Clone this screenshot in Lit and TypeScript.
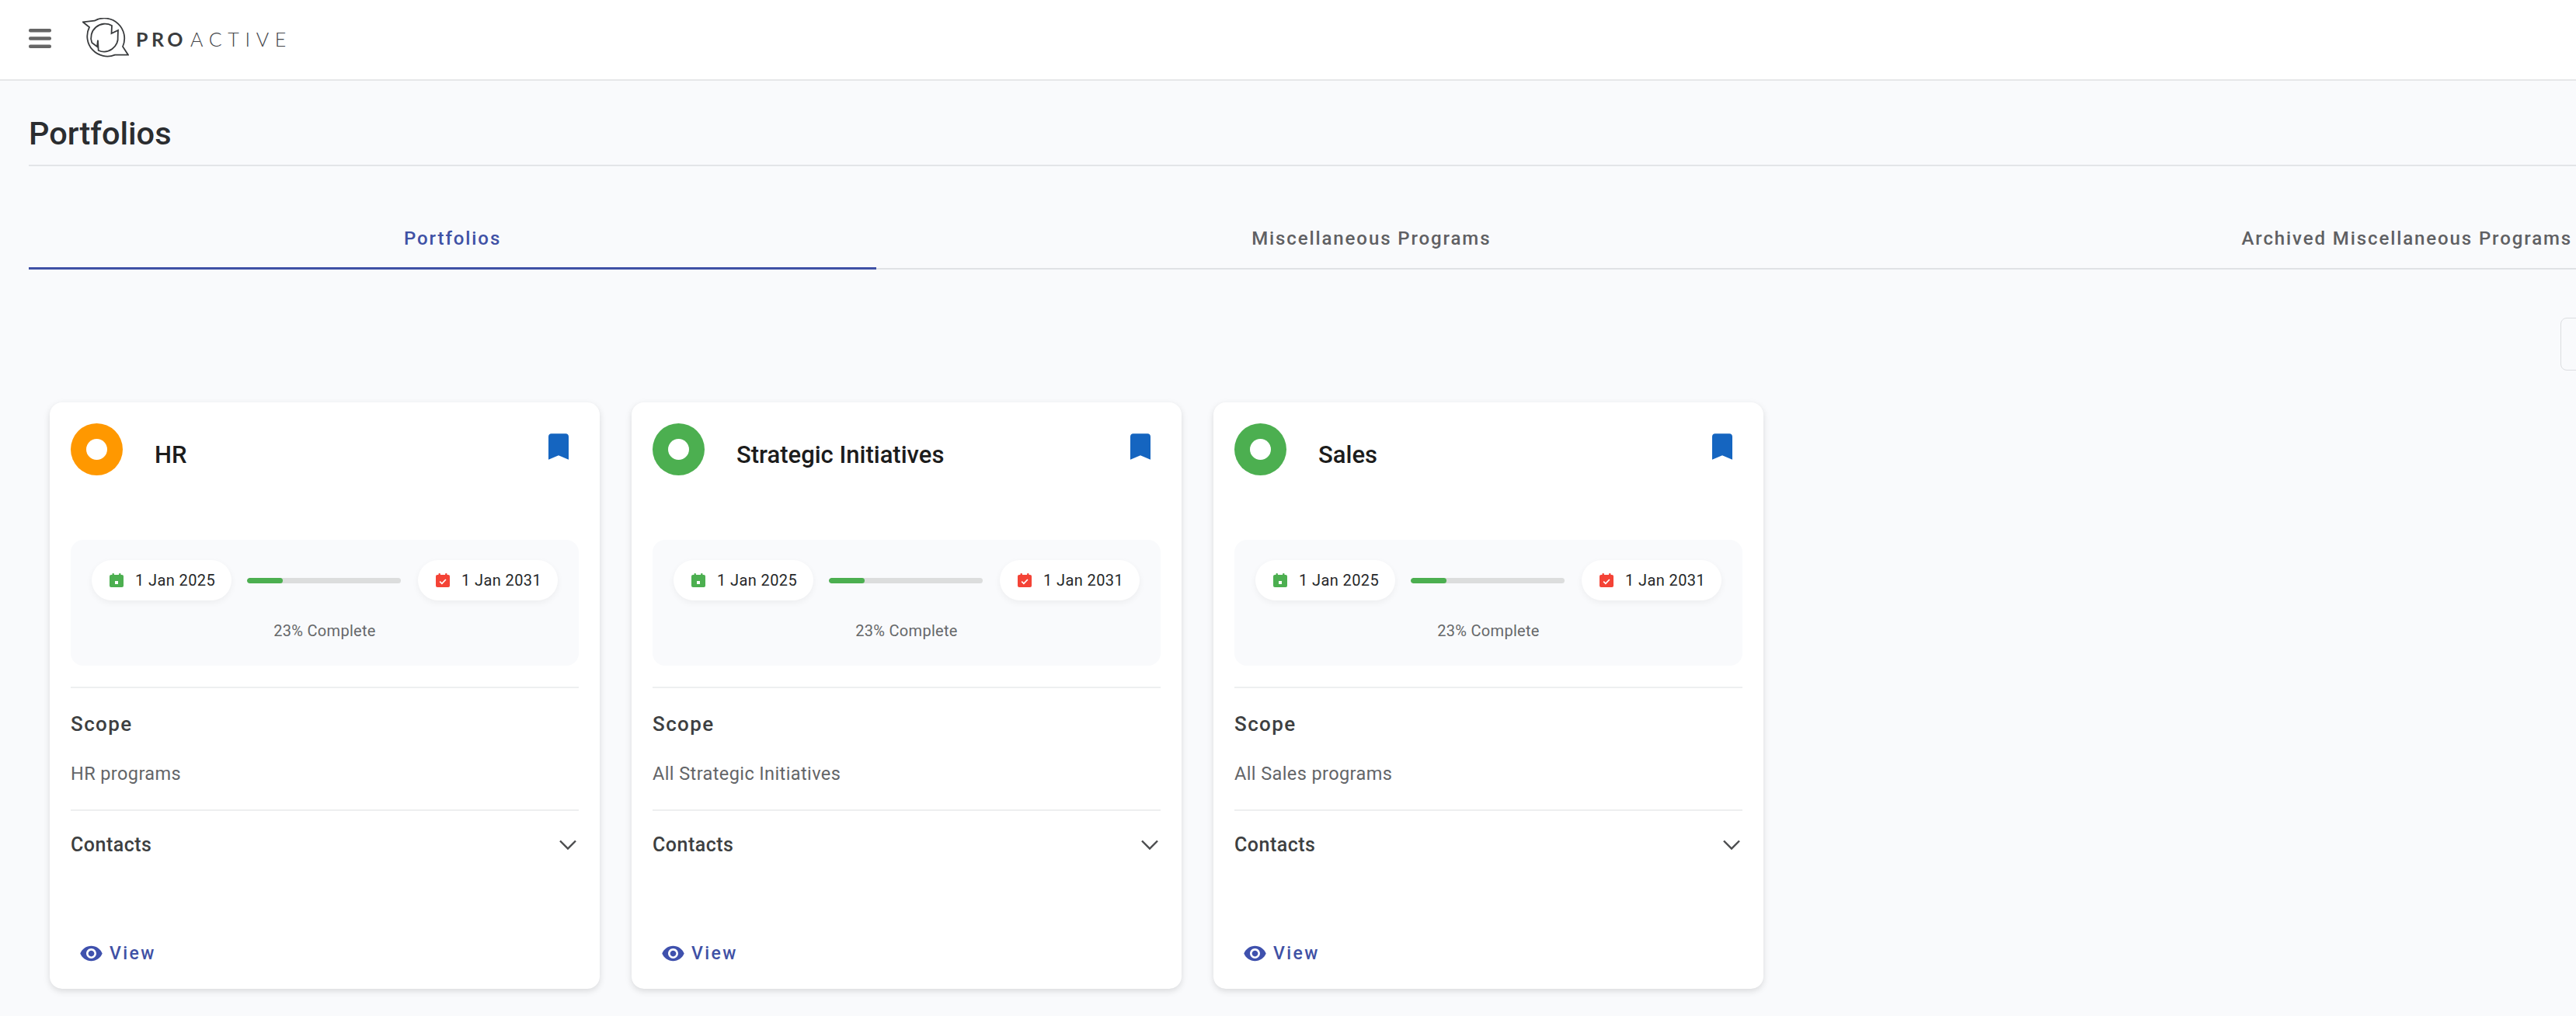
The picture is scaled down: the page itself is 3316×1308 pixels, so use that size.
import { html, css, LitElement, svg } from 'lit';
import { customElement } from 'lit/decorators.js';

interface Portfolio {
  name: string;
  status: string;
  scope: string;
}

const portfolios: Portfolio[] = [
  { name: 'HR', status: '#ff9800', scope: 'HR programs' },
  { name: 'Strategic Initiatives', status: '#4caf50', scope: 'All Strategic Initiatives' },
  { name: 'Sales', status: '#4caf50', scope: 'All Sales programs' },
];

const tabs = ['Portfolios', 'Miscellaneous Programs', 'Archived Miscellaneous Programs'];

const calendarBody = svg`
  <rect x="0" y="2" width="18" height="16" rx="2"></rect>
  <rect x="3.5" y="0" width="2.4" height="4" rx="1"></rect>
  <rect x="12.1" y="0" width="2.4" height="4" rx="1"></rect>
`;

@customElement('app-root')
export class AppRoot extends LitElement {
  static styles = css`
    :host {
      display: block;
      width: 100%;
      height: 1308px;
      overflow: hidden;
      background-color: #f9fafc;
      font-family: Roboto, "Liberation Sans", sans-serif;
      color: #2b2b2b;
    }

    .topbar {
      display: flex;
      align-items: center;
      height: 102px;
      padding-left: 37px;
      background-color: #ffffff;
      border-bottom: 2px solid #e6e7e9;
      box-sizing: content-box;
    }

    .menu {
      display: block;
      margin-top: -3px;
    }

    .logo {
      display: block;
      margin-left: 40px;
      margin-top: -3px;
    }

    .wordmark {
      margin-left: 9px;
      margin-top: -3px;
      font-family: Lato, sans-serif;
      font-size: 25px;
      line-height: 30px;
      letter-spacing: 7.7px;
      color: #44464a;
      font-weight: 300;
      white-space: nowrap;
    }

    .wordmark b {
      margin-right: 5px;
      font-weight: 700;
      letter-spacing: 4.5px;
      color: #3a3c3e;
    }

    main {
      padding-left: 37px;
    }

    .page-title {
      margin: 0;
      padding: 46px 0 19px;
      font-size: 41.5px;
      line-height: 43px;
      font-weight: 500;
      color: #2b2d30;
      border-bottom: 2px solid #e3e5e8;
    }

    .tabs {
      display: flex;
      height: 133px;
      width: 3800px;
      box-sizing: border-box;
      border-bottom: 2px solid #e0e2e5;
    }

    .tab {
      flex: none;
      display: flex;
      align-items: flex-end;
      height: 133px;
      box-sizing: border-box;
      padding: 0 483px 25px;
      font-size: 24px;
      line-height: 30px;
      font-weight: 500;
      letter-spacing: 1.9px;
      color: #5f6063;
      white-space: nowrap;
    }

    .tab.active {
      padding-bottom: 22px;
      color: #3f51a5;
      border-bottom: 3px solid #3f51a5;
    }

    .toolbar {
      display: flex;
      height: 68px;
      margin-top: 62px;
      padding-left: 3259px;
      width: 3400px;
    }

    .toolbar-box {
      flex: none;
      width: 100px;
      height: 68px;
      box-sizing: border-box;
      border: 1px solid #dcdee1;
      border-radius: 8px;
    }

    .cards {
      display: flex;
      gap: 41px;
      margin-top: 41px;
      margin-left: 27px;
    }

    .card {
      flex: none;
      display: flex;
      flex-direction: column;
      width: 708px;
      height: 755px;
      box-sizing: border-box;
      padding: 27px 27px 30px;
      background-color: #ffffff;
      border-radius: 16px;
      box-shadow: 0 3px 8px rgba(0, 0, 0, 0.13);
    }

    .card-head {
      display: flex;
      align-items: flex-start;
      height: 67px;
      margin-bottom: 83px;
    }

    .status {
      flex: none;
      display: flex;
      align-items: center;
      justify-content: center;
      width: 67px;
      height: 67px;
      border-radius: 50%;
    }

    .status span {
      width: 27px;
      height: 27px;
      border-radius: 50%;
      background-color: #ffffff;
    }

    .card-title {
      flex: 1;
      margin: 21px 0 0 41px;
      font-size: 31px;
      line-height: 40px;
      font-weight: 500;
      color: #1c1c1c;
    }

    .bookmark {
      flex: none;
      margin: 13px 13px 0 0;
      fill: #1565c0;
    }

    .timeline {
      height: 162px;
      box-sizing: border-box;
      padding: 26px 27px 0;
      background-color: #f9fafc;
      border-radius: 16px;
    }

    .dates {
      display: flex;
      align-items: center;
      gap: 21px;
    }

    .pill {
      flex: none;
      display: flex;
      align-items: center;
      gap: 15px;
      width: 180px;
      height: 52px;
      box-sizing: border-box;
      padding-left: 23px;
      background-color: #ffffff;
      border-radius: 26px;
      box-shadow: 0 3px 8px rgba(0, 0, 0, 0.05);
      font-size: 20px;
      letter-spacing: 0.4px;
      color: #26282a;
      white-space: nowrap;
    }

    .pill svg {
      flex: none;
    }

    .start svg {
      fill: #4caf50;
    }

    .end svg {
      fill: #f44336;
    }

    .bar {
      flex: 1;
      height: 7px;
      margin: 0 1px 0 -1px;
      border-radius: 4px;
      background-color: #dcdddd;
      overflow: hidden;
    }

    .bar div {
      height: 100%;
      border-radius: 4px;
      background-color: #4caf50;
    }

    .percent {
      margin-top: 27px;
      text-align: center;
      font-size: 20px;
      line-height: 24px;
      letter-spacing: 0.3px;
      color: #66686a;
    }

    .rule {
      height: 2px;
      background-color: #eeeff0;
    }

    .rule.first {
      margin-top: 27px;
    }

    .label {
      line-height: 30px;
      font-weight: 500;
      color: #3d3f41;
    }

    .scope-label {
      margin-top: 31px;
      font-size: 26px;
      letter-spacing: 1.4px;
    }

    .scope {
      margin: 36px 0 33px;
      font-size: 23.5px;
      line-height: 26px;
      letter-spacing: 0.4px;
      color: #636568;
    }

    .contacts {
      display: flex;
      align-items: center;
      justify-content: space-between;
      margin-top: 29px;
      font-size: 25px;
      letter-spacing: 0.5px;
    }

    .contacts svg {
      margin-right: 3px;
    }

    .view {
      display: flex;
      align-items: center;
      gap: 8px;
      margin-top: auto;
      padding-left: 11px;
      font-size: 23px;
      line-height: 30px;
      font-weight: 500;
      letter-spacing: 2.4px;
      color: #3f51a5;
    }

    .view svg {
      flex: none;
      fill: #3f51ad;
    }
  `;

  private renderCard(p: Portfolio) {
    return html`
      <section class="card">
        <div class="card-head">
          <div class="status" style="background-color: ${p.status}"><span></span></div>
          <div class="card-title">${p.name}</div>
          <svg class="bookmark" width="26" height="34" viewBox="5 3 14 18">
            <path d="M17 3H7c-1.1 0-1.99.9-1.99 2L5 21l7-3 7 3V5c0-1.1-.9-2-2-2z"></path>
          </svg>
        </div>
        <div class="timeline">
          <div class="dates">
            <div class="pill start">
              <svg width="18" height="18" viewBox="0 0 18 18">
                ${calendarBody}
                <rect x="7" y="10" width="4" height="4" fill="#fff"></rect>
              </svg>
              1 Jan 2025
            </div>
            <div class="bar"><div style="width: 23%"></div></div>
            <div class="pill end">
              <svg width="18" height="18" viewBox="0 0 18 18">
                ${calendarBody}
                <path d="M5.2 10.6l2.7 2.7 5-5.3" fill="none" stroke="#fff" stroke-width="1.7"></path>
              </svg>
              1 Jan 2031
            </div>
          </div>
          <div class="percent">23% Complete</div>
        </div>
        <div class="rule first"></div>
        <div class="label scope-label">Scope</div>
        <div class="scope">${p.scope}</div>
        <div class="rule"></div>
        <div class="label contacts">
          Contacts
          <svg width="22" height="14" viewBox="0 0 22 14" fill="none" stroke="#4a4b4d" stroke-width="2.4">
            <polyline points="1,1.5 11,11.5 21,1.5"></polyline>
          </svg>
        </div>
        <div class="view">
          <svg width="31" height="31" viewBox="0 0 24 24">
            <path
              d="M12 4.5C7 4.5 2.73 7.61 1 12c1.73 4.39 6 7.5 11 7.5s9.27-3.11 11-7.5c-1.73-4.39-6-7.5-11-7.5zM12 17c-2.76 0-5-2.24-5-5s2.24-5 5-5 5 2.24 5 5-2.24 5-5 5zm0-8c-1.66 0-3 1.34-3 3s1.34 3 3 3 3-1.34 3-3-1.34-3-3-3z"
            ></path>
          </svg>
          View
        </div>
      </section>
    `;
  }

  render() {
    return html`
      <header class="topbar">
        <svg class="menu" width="29" height="25" viewBox="0 0 29 25" fill="#666666">
          <rect y="0" width="29" height="4.6" rx="2"></rect>
          <rect y="10.2" width="29" height="4.6" rx="2"></rect>
          <rect y="20.4" width="29" height="4.6" rx="2"></rect>
        </svg>
        <svg class="logo" width="60" height="54" viewBox="0 0 60 54" fill="none" stroke="#3a3c3e" stroke-width="1.8">
          <path d="M0.7 5.3L15.7 3.7A26 26 0 0 1 52 37L59 47.7L42 47.7A26 26 0 0 1 9 12Z"></path>
          <path d="M37.5 20L38 10A18 18 0 0 0 12.3 32L19 37L20 28.7L20.7 42A18 18 0 0 0 45.7 23.7L46 16Z"></path>
        </svg>
        <div class="wordmark"><b>PRO</b>ACTIVE</div>
      </header>
      <main>
        <h1 class="page-title">Portfolios</h1>
        <nav class="tabs">
          ${tabs.map((t, i) => html`<div class="tab ${i === 0 ? 'active' : ''}">${t}</div>`)}
        </nav>
        <div class="toolbar"><div class="toolbar-box"></div></div>
        <div class="cards">${portfolios.map((p) => this.renderCard(p))}</div>
      </main>
    `;
  }
}
